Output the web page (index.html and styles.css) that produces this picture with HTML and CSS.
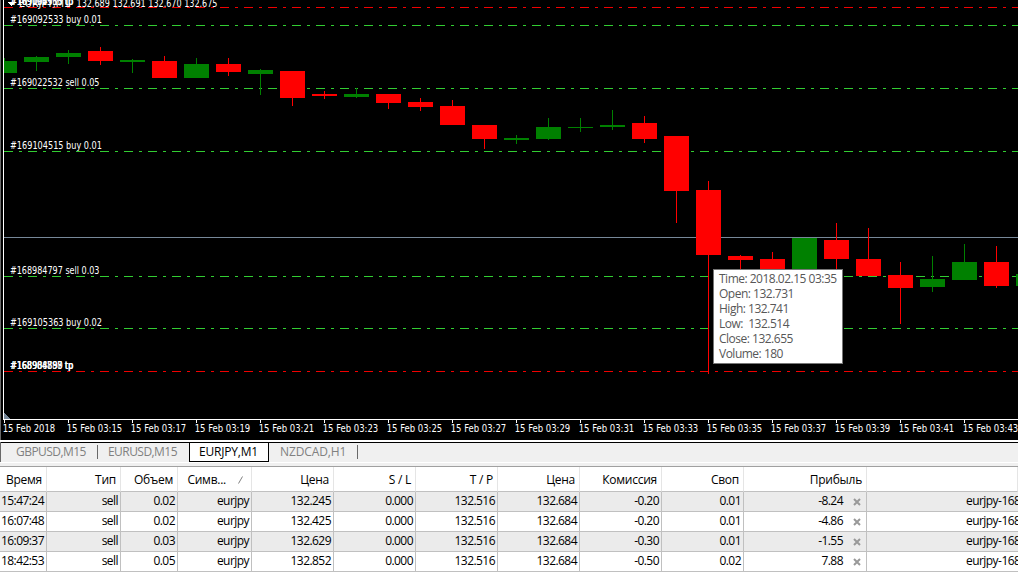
FILE: index.html
```html
<!DOCTYPE html>
<html lang="ru">
<head>
    <meta charset="UTF-8">
    <meta name="viewport" content="width=device-width, initial-scale=1.0">
    <title>EURJPY,M1</title>
    <link rel="stylesheet" href="styles.css">
</head>
<body>
    <div class="chart">
        <svg id="chart" width="1018" height="440" viewBox="0 0 1018 440">
            <rect class="edge" x="0" y="0" width="1" height="440"/>
            <path class="level level-red" d="M4 7.5H1018"/>
            <path class="level" d="M4 25.5H1018M4 88.5H1018M4 151.5H1018M4 276.5H1018M4 328.5H1018"/>
            <path class="level level-red" d="M4 371.5H1018"/>
            <path class="price" d="M4 237.5H1018"/>
            <g id="candles"></g>
            <path class="axis" d="M3.5 0V419.5H1018"/>
            <path class="corner" d="M4 413L10 419H4Z"/>
            <path class="arrow" d="M7 2H15L11 6Z"/>
            <g id="labels" class="labels"></g>
        </svg>
        <div class="tooltip">Time: 2018.02.15 03:35
Open: 132.731
High: 132.741
Low:  132.514
Close: 132.655
Volume: 180</div>
    </div>

    <div class="tabs">
        <span class="tab tab-first">GBPUSD,M15</span>
        <span class="tab tab-second">EURUSD,M15</span>
        <span class="tab tab-active">EURJPY,M1</span>
        <span class="tab tab-last">NZDCAD,H1</span>
    </div>

    <table class="orders">
        <colgroup>
            <col class="w-time"><col class="w-type"><col class="w-volume"><col class="w-symbol">
            <col class="w-price"><col class="w-price"><col class="w-price"><col class="w-price"><col class="w-price"><col class="w-price">
            <col class="w-profit"><col class="w-comment">
        </colgroup>
        <thead>
            <tr>
                <th>Время</th><th>Тип</th><th>Объем</th>
                <th class="sorted">Симв...<svg class="sort" width="5" height="8"><path d="M0.5 7.5L4.5 0.5"/></svg></th>
                <th>Цена</th><th>S / L</th><th>T / P</th><th>Цена</th><th>Комиссия</th><th>Своп</th><th>Прибыль</th><th></th>
            </tr>
        </thead>
        <tbody id="orders"></tbody>
    </table>

    <script>
        var svgNS = 'http://www.w3.org/2000/svg';

        // color, body top, body bottom, high, low
        var candles = [
            ['g', 61, 73, 58, 73], ['g', 57, 62, 56, 71], ['g', 53, 57, 50, 64], ['r', 51, 61, 47, 65],
            ['g', 60, 62, 59, 73], ['r', 61, 78, 56, 78], ['g', 64, 78, 58, 78], ['r', 64, 72, 58, 76],
            ['g', 70, 74, 69, 95], ['r', 71, 98, 71, 106], ['r', 94, 96, 91, 99], ['g', 94, 97, 88, 98],
            ['r', 94, 103, 94, 109], ['r', 102, 107, 98, 111], ['r', 106, 125, 100, 125], ['r', 125, 139, 125, 149],
            ['g', 138, 140, 135, 144], ['g', 127, 139, 118, 140], ['g', 127, 128, 118, 132], ['g', 125, 127, 110, 130],
            ['r', 123, 139, 116, 143], ['r', 136, 191, 136, 223], ['r', 190, 255, 181, 374], ['r', 256, 260, 255, 272],
            ['r', 259, 272, 252, 272], ['g', 238, 272, 238, 272], ['r', 240, 259, 223, 272], ['r', 259, 276, 228, 276],
            ['r', 275, 288, 262, 324], ['g', 279, 287, 256, 292], ['g', 262, 280, 244, 280], ['r', 262, 286, 246, 288],
            ['g', 274, 286, 274, 286]
        ];

        // text, x, baseline, width
        var labels = [
            ['#169092533 buy 0.01', 10, 23.4, 92], ['#169022532 sell 0.05', 10, 86.4, 89.5],
            ['#169104515 buy 0.01', 10, 149.4, 92], ['#168984797 sell 0.03', 10, 274.4, 89.5],
            ['#169105363 buy 0.02', 10, 326.4, 92],
            ['#168984797 tp', 10, 369.4, 63], ['#168988899 tp', 10.5, 369.4, 63], ['#168904888 tp', 10, 369.4, 63],
            ['#169092533 tp', 10, 5.4, 63], ['#169104515 tp', 10.5, 5.4, 63], ['#169105363 tp', 10, 5.4, 63],
            ['EURJPY,M1', 19, 7.4, 51], ['132.689 132.691 132.670 132.675', 76.5, 7.4, 141]
        ];

        function add(parent, name, attrs) {
            var el = document.createElementNS(svgNS, name);
            for (var key in attrs) {
                el.setAttribute(key, attrs[key]);
            }
            parent.appendChild(el);
            return el;
        }

        var candleGroup = document.getElementById('candles');
        candles.forEach(function (c, i) {
            var x = 4 + i * 32;
            var left = Math.max(x - 12, 4);
            add(candleGroup, 'rect', { 'class': c[0], x: x, y: c[3], width: 1, height: c[4] - c[3] });
            add(candleGroup, 'rect', { 'class': c[0], x: left, y: c[1], width: x + 13 - left, height: c[2] - c[1] });
        });

        // Time axis, one mark every two candles
        for (var i = 0; i < 16; i++) {
            var x = 4 + i * 64;
            add(candleGroup, 'rect', { 'class': 'tick', x: x, y: 420, width: 1, height: 3 });
            labels.push([i === 0 ? '15 Feb 2018' : '15 Feb 03:' + (13 + i * 2), x - 1.3, 432.4, i === 0 ? 52.5 : 55.5]);
        }

        labels.forEach(function (l) {
            add(document.getElementById('labels'), 'text', {
                x: l[1], y: l[2], textLength: l[3], lengthAdjust: 'spacingAndGlyphs'
            }).textContent = l[0];
        });

        var orders = [
            ['15:47:24', '0.02', '132.245', '-0.20', '0.01', '-8.24'],
            ['16:07:48', '0.02', '132.425', '-0.20', '0.01', '-4.86'],
            ['16:09:37', '0.03', '132.629', '-0.30', '0.01', '-1.55'],
            ['18:42:53', '0.05', '132.852', '-0.50', '0.02', '7.88']
        ];
        var cross = '<svg class="close" width="8" height="8"><path d="M1 1L7 7M7 1L1 7"/></svg>';

        document.getElementById('orders').innerHTML = orders.map(function (o) {
            var cells = [o[0], 'sell', o[1], 'eurjpy', o[2], '0.000', '132.516', '132.684', o[3], o[4], o[5] + cross];
            return '<tr><td>' + cells.join('</td><td>') + '</td><td class="comment">eurjpy-168</td></tr>';
        }).join('');
    </script>
</body>
</html>
```
FILE: styles.css
```css
body {
    margin: 0;
    width: 1018px;
    height: 573px;
    overflow: hidden;
    background-color: #fff;
    font-family: "Open Sans", "Noto Sans", sans-serif;
    font-size: 12px;
    color: #000;
}

.chart {
    position: relative;
    height: 440px;
    background-color: #000;
}

.chart svg {
    display: block;
    shape-rendering: crispEdges;
}

.edge {
    fill: #696969;
}

.level {
    fill: none;
    stroke: #32cd32;
    stroke-dasharray: 9 6 3 6;
}

.level-red {
    stroke: #f00000;
}

.price {
    stroke: #778899;
}

.axis {
    fill: none;
    stroke: #fff;
}

.corner {
    fill: #778899;
}

.arrow,
.tick {
    fill: #fff;
}

.g {
    fill: #008000;
}

.r {
    fill: #f00;
}

.labels {
    fill: #fff;
    font-family: "DejaVu Sans Condensed", "DejaVu Sans", sans-serif;
    font-size: 10px;
    font-stretch: condensed;
}

.tooltip {
    position: absolute;
    left: 713px;
    top: 269px;
    width: 130px;
    height: 95px;
    box-sizing: border-box;
    padding: 1px 0 0 5px;
    border: 1px solid #767676;
    background-color: #fff;
    color: #575757;
    letter-spacing: -0.5px;
    line-height: 15px;
    white-space: pre;
}

.tabs {
    display: flex;
    height: 27px;
    box-sizing: border-box;
    border-top: 2px solid #fff;
    border-bottom: 1px solid #a0a0a0;
    background: linear-gradient(#000 1px, #f0f0f0 1px, #f0f0f0 20px, #fff 20px, #fff 21px, #f0f0f0 21px);
    line-height: 20px;
    color: #808080;
}

.tab {
    height: 20px;
    box-sizing: border-box;
    white-space: nowrap;
}

.tab-first {
    width: 98px;
    padding-left: 15px;
    border-left: 1px solid #696969;
}

.tab-second {
    width: 91px;
    padding-left: 10px;
}

.tab-first,
.tab-second {
    letter-spacing: -0.55px;
}

.tab-active {
    width: 80px;
    padding-left: 9px;
    border: 1px solid #000;
    background-color: #fff;
    color: #000;
    letter-spacing: -0.2px;
    line-height: 18px;
}

.tab-last {
    width: 89px;
    padding-left: 11px;
    letter-spacing: -0.1px;
}

.tab-first,
.tab-last {
    background: linear-gradient(#696969, #696969) right 3px / 1px 14px no-repeat;
}

.orders {
    width: 1018px;
    table-layout: fixed;
    border-collapse: separate;
    border-spacing: 0;
}

.w-time { width: 47px; }
.w-type { width: 74px; }
.w-volume { width: 57px; }
.w-symbol { width: 74px; }
.w-price { width: 82px; }
.w-profit { width: 123px; }
.w-comment { width: 151px; }

.orders th,
.orders td {
    box-sizing: border-box;
    padding: 0 2px 0 0;
    border-right: 1px solid #c0c0c0;
    border-bottom: 1px solid #c0c0c0;
    font-weight: normal;
    text-align: right;
    white-space: nowrap;
    overflow: hidden;
}

.orders th {
    height: 25px;
    padding-right: 4px;
    border-right-color: #e5e5e5;
    letter-spacing: -0.25px;
}

.orders td {
    height: 20px;
    padding-bottom: 2px;
    letter-spacing: -0.55px;
    line-height: 17px;
}

.orders tbody tr:nth-child(odd) {
    background-color: #ebebeb;
}

.orders .sorted {
    padding-right: 8px;
}

.sort {
    margin-left: 12px;
    stroke: #808080;
    fill: none;
}

.close {
    margin: 0 3px 0 10px;
    vertical-align: -1px;
    stroke: #999;
    stroke-width: 2;
    fill: none;
}

.orders .comment {
    padding-left: 99px;
    text-align: left;
    border-right: none;
}
```
